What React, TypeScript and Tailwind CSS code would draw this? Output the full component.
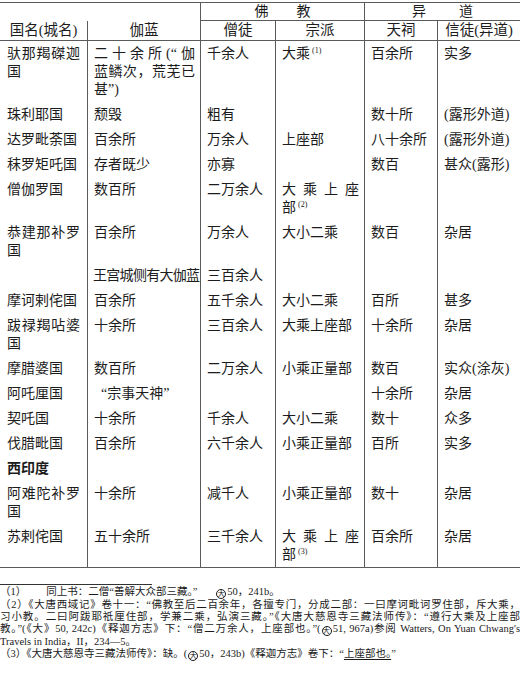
import React from "react";

const LINE = "border-[#5a5a5a]";

function J({ lines }: { lines: React.ReactNode[] }) {
  return (
    <>
      {lines.map((l, i) => (
        <div
          key={i}
          className={i < lines.length - 1 ? "text-justify [text-align-last:justify]" : ""}
        >
          {l}
        </div>
      ))}
    </>
  );
}

function Sup({ n }: { n: number }) {
  return <span className="relative -top-[5px] ml-[2px] text-[8px] leading-none">({n})</span>;
}

function Circ() {
  return (
    <span className="inline-block w-[10px] h-[10px] rounded-full border border-current text-[7px] leading-[8px] text-center align-[-1px] mx-[1px]">
      大
    </span>
  );
}

const rows: React.ReactNode[][] = [
  [
    <J lines={["驮那羯磔迦", "国"]} />,
    <J lines={["二十余所(“伽", "蓝鳞次，荒芜已", "甚”)"]} />,
    "千余人",
    <>
      大乘
      <Sup n={1} />
    </>,
    "百余所",
    "实多",
  ],
  ["珠利耶国", "颓毁", "粗有", "", "数十所", "(露形外道)"],
  ["达罗毗荼国", "百余所", "万余人", "上座部", "八十余所", "(露形外道)"],
  ["秣罗矩吒国", "存者既少", "亦寡", "", "数百", "甚众(露形)"],
  [
    "僧伽罗国",
    "数百所",
    "二万余人",
    <J
      lines={[
        "大乘上座",
        <>
          部<Sup n={2} />
        </>,
      ]}
    />,
    "",
    "",
  ],
  [<J lines={["恭建那补罗", "国"]} />, "百余所", "万余人", "大小二乘", "数百", "杂居"],
  [
    "",
    <span className="whitespace-nowrap tracking-[-0.7px] -ml-[1px]">王宫城侧有大伽蓝</span>,
    "三百余人",
    "",
    "",
    "",
  ],
  ["摩诃剌侘国", "百余所", "五千余人", "大小二乘", "百所", "甚多"],
  [<J lines={["跋禄羯呫婆", "国"]} />, "十余所", "三百余人", "大乘上座部", "十余所", "杂居"],
  ["摩腊婆国", "数百所", "二万余人", "小乘正量部", "数百", "实众(涂灰)"],
  ["阿吒厘国", <span className="pl-[7px]">“宗事天神”</span>, "", "", "十余所", "杂居"],
  ["契吒国", "十余所", "千余人", "大小二乘", "数十", "众多"],
  ["伐腊毗国", "百余所", "六千余人", "小乘正量部", "百所", "实多"],
  [<span className="font-semibold">西印度</span>, "", "", "", "", ""],
  [<J lines={["阿难陀补罗", "国"]} />, "十余所", "减千人", "小乘正量部", "数十", "杂居"],
  [
    "苏剌侘国",
    "五十余所",
    "三千余人",
    <J
      lines={[
        "大乘上座",
        <>
          部<Sup n={3} />
        </>,
      ]}
    />,
    "百余所",
    "杂居",
  ],
];

const JL = "text-justify [text-align-last:justify] whitespace-nowrap";

export default function App() {
  return (
    <div className="w-[520px] h-[682px] bg-white text-[#1c1c1c] font-['Liberation_Serif','Noto_Sans_CJK_SC',serif] overflow-hidden">
      <div className={`mt-[2px] border-t-[1.5px] border-b-[1.5px] ${LINE}`}>
        <table className="w-[520px] table-fixed border-separate border-spacing-0 text-[14px]">
          <colgroup>
            <col className="w-[87px]" />
            <col className="w-[113px]" />
            <col className="w-[75px]" />
            <col className="w-[89px]" />
            <col className="w-[73px]" />
            <col className="w-[83px]" />
          </colgroup>
          <thead>
            <tr className="h-[18px]">
              <th colSpan={2} className="p-0 font-normal"></th>
              <th colSpan={2} className={`p-0 font-normal border-l border-b ${LINE} leading-[17px]`}>
                <div className="flex justify-center gap-[28px]">
                  <span>佛</span>
                  <span>教</span>
                </div>
              </th>
              <th colSpan={2} className={`p-0 font-normal border-l border-b ${LINE} leading-[17px]`}>
                <div className="flex justify-center gap-[33px]">
                  <span>异</span>
                  <span>道</span>
                </div>
              </th>
            </tr>
            <tr className="h-[20px]">
              {["国名(城名)", "伽蓝", "僧徒", "宗派", "天祠", "信徒(异道)"].map((h, i) => (
                <th
                  key={i}
                  className={`p-0 font-normal text-center leading-[19px] text-[14.5px] border-b ${LINE} ${
                    i > 0 ? "border-l" : ""
                  }`}
                >
                  {h}
                </th>
              ))}
            </tr>
          </thead>
          <tbody>
            {rows.map((r, ri) => (
              <tr key={ri}>
                {r.map((c, ci) => (
                  <td
                    key={ci}
                    className={`align-top py-[3.5px] leading-[18px] ${
                      ci === 0 ? "pl-[7px] pr-[7px]" : `pl-[6px] pr-[5px] border-l ${LINE}`
                    }`}
                  >
                    {c}
                  </td>
                ))}
              </tr>
            ))}
          </tbody>
        </table>
      </div>

      <div className="mt-[16px] w-[152px] h-px bg-[#333]" />

      <div className="mt-[1px] text-[10.5px] leading-[12px] text-[#1a1a1a]">
        <div className="whitespace-nowrap">
          （1）<span className="ml-[20px]">同上书：二僧“善解大众部三藏。”</span>
          <span className="ml-[18px]">
            <Circ />
            50，241b。
          </span>
        </div>
        <div className={JL}>
          （2）《大唐西域记》卷十一：“佛教至后二百余年，各擅专门，分成二部：一曰摩诃毗诃罗住部，斥大乘，
        </div>
        <div className={JL}>
          习小教。二曰阿跋耶祇厘住部，学兼二乘，弘演三藏。”《大唐大慈恩寺三藏法师传》：“遵行大乘及上座部
        </div>
        <div className={JL}>
          教。”(《大》50, 242c)《释迦方志》下：“僧二万余人，上座部也。”(
          <Circ />
          51, 967a)参阅 Watters, On Yuan Chwang's
        </div>
        <div className="whitespace-nowrap">Travels in India，II，234—5。</div>
        <div className="whitespace-nowrap">
          （3）《大唐大慈恩寺三藏法师传》：缺。(
          <Circ />
          50，243b)《释迦方志》卷下：“<span className="underline underline-offset-2">上座部也。</span>”
        </div>
      </div>
    </div>
  );
}
